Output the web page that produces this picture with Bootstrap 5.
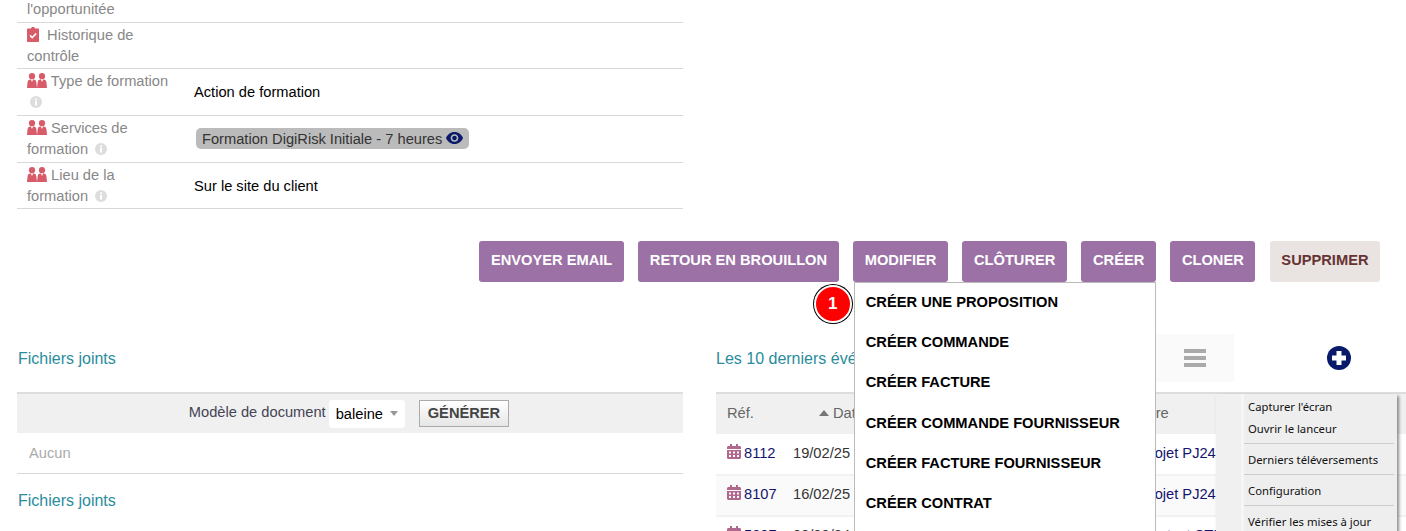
<!DOCTYPE html>
<html lang="fr">
<head>
<meta charset="UTF-8">
<title>Fiche projet</title>
<link href="https://cdn.jsdelivr.net/npm/bootstrap@5.3.0/dist/css/bootstrap.min.css" rel="stylesheet">
<style>
    body {
        font-family: "Liberation Sans", Arial, sans-serif;
        font-size: 14.67px;
        line-height: 21px;
        color: #000;
        height: 531px;
        overflow: hidden;
    }
    /* fiche du haut */
    .fiche {
        width: 666px;
        margin: -2px 0 0 17px;
        table-layout: fixed;
    }
    .fiche td {
        padding: 2px 0 2px 10px;
        border-bottom: 1px solid #d8d8d8;
        vertical-align: middle;
        font-size: 14.67px;
        line-height: 21px;
        color: #000;
    }
    .fiche td.lib { width: 173px; padding-right: 12px; color: #888; }
    .fiche td.val { padding-left: 4px; }
    .fiche tr.first td { padding: 1px 0 2px 10px; }
    .fiche tr.second td { padding-top: 2px; padding-bottom: 1px; }
    .fiche tr.last td { padding-top: 2px; padding-bottom: 1px; }
    .pic { fill: #d85b6a; vertical-align: -2px; }
    .pic-clip { margin-right: 4px; }
    .pic-info { fill: #ddd; vertical-align: -1px; margin-left: 2.5px; }
    .tag-service {
        display: inline-block;
        margin-left: 2px;
        padding: 2px 6px 0;
        background: #bbb;
        border-radius: 5px;
        color: #333;
        line-height: 19px;
    }
    .tag-service svg { fill: #0a1a6a; vertical-align: 0; }

    /* boutons */
    .actions { margin-top: 32px; padding-right: 26px; gap: 14.6px; }
    .btn-act {
        height: 41px;
        padding: 0 11.5px;
        border: 0;
        border-radius: 3px;
        background: #9c72a6;
        color: #fff;
        font-size: 14.67px;
        font-weight: 700;
        line-height: 38px;
    }
    .btn-act:hover { background: #9c72a6; color: #fff; }
    .btn-del, .btn-del:hover { background: #e9e4e1; color: #633; }
    .menu-creer {
        top: 100%;
        right: 0;
        width: 302px;
        height: 300px;
        margin: 0;
        padding: 0;
        border: 1px solid #bbb;
        border-radius: 0;
        z-index: 20;
    }
    .menu-creer .dropdown-item {
        height: 40.2px;
        padding: 0 11px;
        font-size: 14.67px;
        font-weight: 700;
        line-height: 38px;
        color: #000;
    }
    .pastille {
        position: absolute;
        top: 2px;
        left: -41px;
        width: 38px;
        height: 38px;
        border-radius: 50%;
        background: #f00;
        border: 2px solid #fff;
        box-shadow: 0 0 0 1px #000;
        color: #fff;
        font-size: 17px;
        font-weight: 700;
        line-height: 33px;
        text-align: center;
    }

    /* blocs du bas */
    .bas { margin-top: 52px; }
    .col-g { width: 666px; margin-left: 17px; }
    .col-d { width: 690px; margin-left: 33px; }
    .titre-bloc { height: 48px; margin-bottom: 10px; }
    .titre-txt { font-size: 16px; color: #2a8c9c; padding-left: 1px; }
    .col-d .titre-txt { width: 440px; padding-left: 0; white-space: nowrap; }
    .bloc-liste { width: 78px; height: 48px; background: #fafafa; }
    .bloc-liste svg { fill: #aaa; }
    .btn-plus { margin-left: 93px; fill: #0a1a6a; }
    .bande {
        height: 41px;
        padding-right: 2px;
        background: #f0f0f0;
        border-top: 2px solid #ddd;
        color: #445;
    }
    .bande-lib { margin-bottom: 2px; }
    .choix {
        width: 76px;
        height: 28px;
        margin: 0 14px 0 3px;
        padding: 0 7px;
        background: #fff;
        border-radius: 3px;
        color: #000;
        line-height: 28px;
    }
    .choix::after {
        content: "";
        border: 4px solid transparent;
        border-top: 5px solid #999;
        border-bottom: 0;
    }
    .btn-gen {
        height: 27px;
        padding: 0 8px;
        background: linear-gradient(#fff, #e6e6e6);
        border: 1px solid #aaa;
        color: #444;
        font-size: 14.67px;
        font-weight: 700;
    }
    .aucun {
        height: 41px;
        padding-left: 12px;
        border-bottom: 1px solid #d8d8d8;
        color: #aaa;
        line-height: 40px;
    }
    .titre-2 { margin-top: 16px; line-height: 22px; }
    .evts { width: 690px; table-layout: fixed; margin: 0; }
    .evts th, .evts td {
        height: 41px;
        padding: 0 0 2px 11px;
        font-size: 14.67px;
        font-weight: 400;
        vertical-align: middle;
        border-bottom: 2px solid #f2f2f2;
        white-space: nowrap;
        background: transparent;
        box-shadow: none;
    }
    .evts thead th { background: #f0f0f0; border-top: 2px solid #ddd; border-bottom: 0; color: #666; }
    .evts tr.alt td { background: #fafafa; }
    .evts td { color: #333; }
    .evts a { color: #14146e; text-decoration: none; }
    .fleche {
        display: inline-block;
        margin: 0 4px 2px 37px;
        border: 5.5px solid transparent;
        border-bottom: 6px solid #777;
        border-top: 0;
    }
    .cal { fill: #b0688c; vertical-align: -1px; margin-right: 3px; }

    /* menu contextuel windows */
    .ctx {
        position: absolute;
        top: 394px;
        left: 1216px;
        width: 181px;
        height: 150px;
        background: #eee;
        box-shadow: 2px 2px 3px rgba(0, 0, 0, .45);
        font-family: "Noto Sans", sans-serif;
        font-size: 11.3px;
        color: #111;
        z-index: 30;
    }
    .ctx-bord { width: 25px; background: #f0f0f0; border-right: 3px solid #f6f6f6; box-sizing: content-box; }
    .ctx-items { width: 150px; padding-top: 2px; }
    .ctx-item { height: 22px; padding-left: 4px; line-height: 22px; }
    .ctx-sep { margin: 3px 0 5px; border-top: 1px solid #ccc; }
</style>
</head>
<body>

<svg width="0" height="0" class="position-absolute">
    <symbol id="s-people" viewBox="0 0 20 15">
        <circle cx="5" cy="3.200" r="3.100"/>
        <circle cx="15" cy="3.200" r="3.100"/>
        <path d="M0 15l.6-6C.9 7.300 2 6.500 3.300 6.500h.5L5 9l1.200-2.500h.6C8 6.500 9 7.300 9.300 9l.7 6z"/>
        <path d="M10 15l.7-6c.3-1.700 1.300-2.500 2.500-2.500h.6L15 9l1.200-2.500h.5c1.300 0 2.400.8 2.700 2.500l.6 6z"/>
    </symbol>
    <symbol id="s-info" viewBox="0 0 12 12">
        <circle cx="6" cy="6" r="6"/>
        <rect x="5" y="5" width="2" height="4.500" fill="#fff"/>
        <rect x="5" y="2.500" width="2" height="1.700" fill="#fff"/>
    </symbol>
    <symbol id="s-cal" viewBox="0 0 14 15">
        <path d="M3 0h2v2h4V0h2v2h1.500C13.300 2 14 2.700 14 3.500V5H0V3.500C0 2.700.7 2 1.500 2H3z"/>
        <path d="M0 6h14v7.500c0 .8-.7 1.500-1.500 1.500h-11C.7 15 0 14.300 0 13.500zm2 1.500v2h2v-2zm4 0v2h2v-2zm4 0v2h2v-2zM2 11v2h2v-2zm4 0v2h2v-2zm4 0v2h2v-2z" fill-rule="evenodd"/>
    </symbol>
</svg>

<table class="table fiche mb-0">
    <tbody>
        <tr class="first"><td class="lib">l'opportunitée</td><td class="val"></td></tr>
        <tr class="second">
            <td class="lib">
                <svg class="pic pic-clip" width="12" height="15" viewBox="0 0 12 15"><path d="M4 1.500C4 .7 4.700 0 6 0s2 .7 2 1.500h3c.6 0 1 .4 1 1V14c0 .6-.4 1-1 1H1c-.6 0-1-.4-1-1V2.500c0-.6.4-1 1-1z"/><path d="M3 8.300l2.200 2.200 4-4" fill="none" stroke="#fff" stroke-width="1.700"/></svg>
                Historique de contrôle
            </td>
            <td class="val"></td>
        </tr>
        <tr>
            <td class="lib"><svg class="pic" width="20" height="15"><use href="#s-people"/></svg> Type de formation <svg class="pic-info" width="12" height="12"><use href="#s-info"/></svg></td>
            <td class="val">Action de formation</td>
        </tr>
        <tr>
            <td class="lib"><svg class="pic" width="20" height="15"><use href="#s-people"/></svg> Services de formation <svg class="pic-info" width="12" height="12"><use href="#s-info"/></svg></td>
            <td class="val">
                <span class="tag-service">Formation DigiRisk Initiale - 7 heures
                    <svg width="17" height="12" viewBox="0 0 17 12"><path d="M8.500 0C12.500 0 15.800 2.700 17 6c-1.200 3.300-4.500 6-8.500 6S1.200 9.300 0 6C1.200 2.700 4.500 0 8.500 0zm0 2.200C6 2.200 4.700 4 4.700 6s1.300 3.800 3.800 3.800S12.300 8 12.300 6 11 2.200 8.500 2.200z" fill-rule="evenodd"/><circle cx="8.500" cy="6" r="2.300"/></svg>
                </span>
            </td>
        </tr>
        <tr class="last">
            <td class="lib"><svg class="pic" width="20" height="15"><use href="#s-people"/></svg> Lieu de la formation <svg class="pic-info" width="12" height="12"><use href="#s-info"/></svg></td>
            <td class="val">Sur le site du client</td>
        </tr>
    </tbody>
</table>

<div class="d-flex justify-content-end actions">
    <a href="#" class="btn btn-act">ENVOYER EMAIL</a>
    <a href="#" class="btn btn-act">RETOUR EN BROUILLON</a>
    <a href="#" class="btn btn-act">MODIFIER</a>
    <a href="#" class="btn btn-act">CLÔTURER</a>
    <div class="position-relative">
        <a href="#" class="btn btn-act">CRÉER</a>
        <div class="dropdown-menu show menu-creer">
            <span class="pastille">1</span>
            <a href="#" class="dropdown-item">CRÉER UNE PROPOSITION</a>
            <a href="#" class="dropdown-item">CRÉER COMMANDE</a>
            <a href="#" class="dropdown-item">CRÉER FACTURE</a>
            <a href="#" class="dropdown-item">CRÉER COMMANDE FOURNISSEUR</a>
            <a href="#" class="dropdown-item">CRÉER FACTURE FOURNISSEUR</a>
            <a href="#" class="dropdown-item">CRÉER CONTRAT</a>
        </div>
    </div>
    <a href="#" class="btn btn-act">CLONER</a>
    <a href="#" class="btn btn-act btn-del">SUPPRIMER</a>
</div>

<div class="d-flex bas">
    <div class="col-g flex-shrink-0">
        <div class="titre-bloc d-flex align-items-center"><span class="titre-txt">Fichiers joints</span></div>
        <div class="bande d-flex align-items-center justify-content-center">
            <span class="bande-lib">Modèle de document</span>
            <span class="choix d-flex align-items-center justify-content-between">baleine</span>
            <button type="button" class="btn-gen">GÉNÉRER</button>
        </div>
        <div class="aucun">Aucun</div>
        <div class="titre-txt titre-2">Fichiers joints</div>
    </div>

    <div class="col-d flex-shrink-0">
        <div class="titre-bloc d-flex align-items-center">
            <span class="titre-txt">Les 10 derniers événements</span>
            <span class="bloc-liste d-flex align-items-center justify-content-center">
                <svg width="22" height="20" viewBox="0 0 22 20"><rect y="1" width="22" height="4"/><rect y="8" width="22" height="4"/><rect y="15" width="22" height="4"/></svg>
            </span>
            <svg class="btn-plus" width="24" height="24" viewBox="0 0 24 24"><circle cx="12" cy="12" r="12"/><rect x="9.500" y="5" width="5" height="14" fill="#fff"/><rect x="5" y="9.500" width="14" height="5" fill="#fff"/></svg>
        </div>
        <table class="table evts">
            <colgroup>
                <col style="width:66px"><col style="width:78px"><col style="width:269px"><col>
            </colgroup>
            <thead>
                <tr><th>Réf.</th><th class="ps-0"><span class="fleche"></span>Date</th><th></th><th>Titre</th></tr>
            </thead>
            <tbody>
                <tr>
                    <td><a href="#"><svg class="cal" width="14" height="15"><use href="#s-cal"/></svg>8112</a></td>
                    <td>19/02/25</td><td></td><td><a href="#">Projet PJ2412</a></td>
                </tr>
                <tr class="alt">
                    <td><a href="#"><svg class="cal" width="14" height="15"><use href="#s-cal"/></svg>8107</a></td>
                    <td>16/02/25</td><td></td><td><a href="#">Projet PJ2412</a></td>
                </tr>
                <tr>
                    <td><a href="#"><svg class="cal" width="14" height="15"><use href="#s-cal"/></svg>5307</a></td>
                    <td>09/09/24</td><td></td><td><a href="#">Contact STI</a></td>
                </tr>
            </tbody>
        </table>
    </div>
</div>

<div class="ctx d-flex">
    <div class="ctx-bord"></div>
    <div class="ctx-items">
        <div class="ctx-item">Capturer l'écran</div>
        <div class="ctx-item">Ouvrir le lanceur</div>
        <div class="ctx-sep"></div>
        <div class="ctx-item">Derniers téléversements</div>
        <div class="ctx-sep"></div>
        <div class="ctx-item">Configuration</div>
        <div class="ctx-sep"></div>
        <div class="ctx-item">Vérifier les mises à jour</div>
    </div>
</div>

<script src="https://cdn.jsdelivr.net/npm/bootstrap@5.3.0/dist/js/bootstrap.bundle.min.js"></script>
</body>
</html>
